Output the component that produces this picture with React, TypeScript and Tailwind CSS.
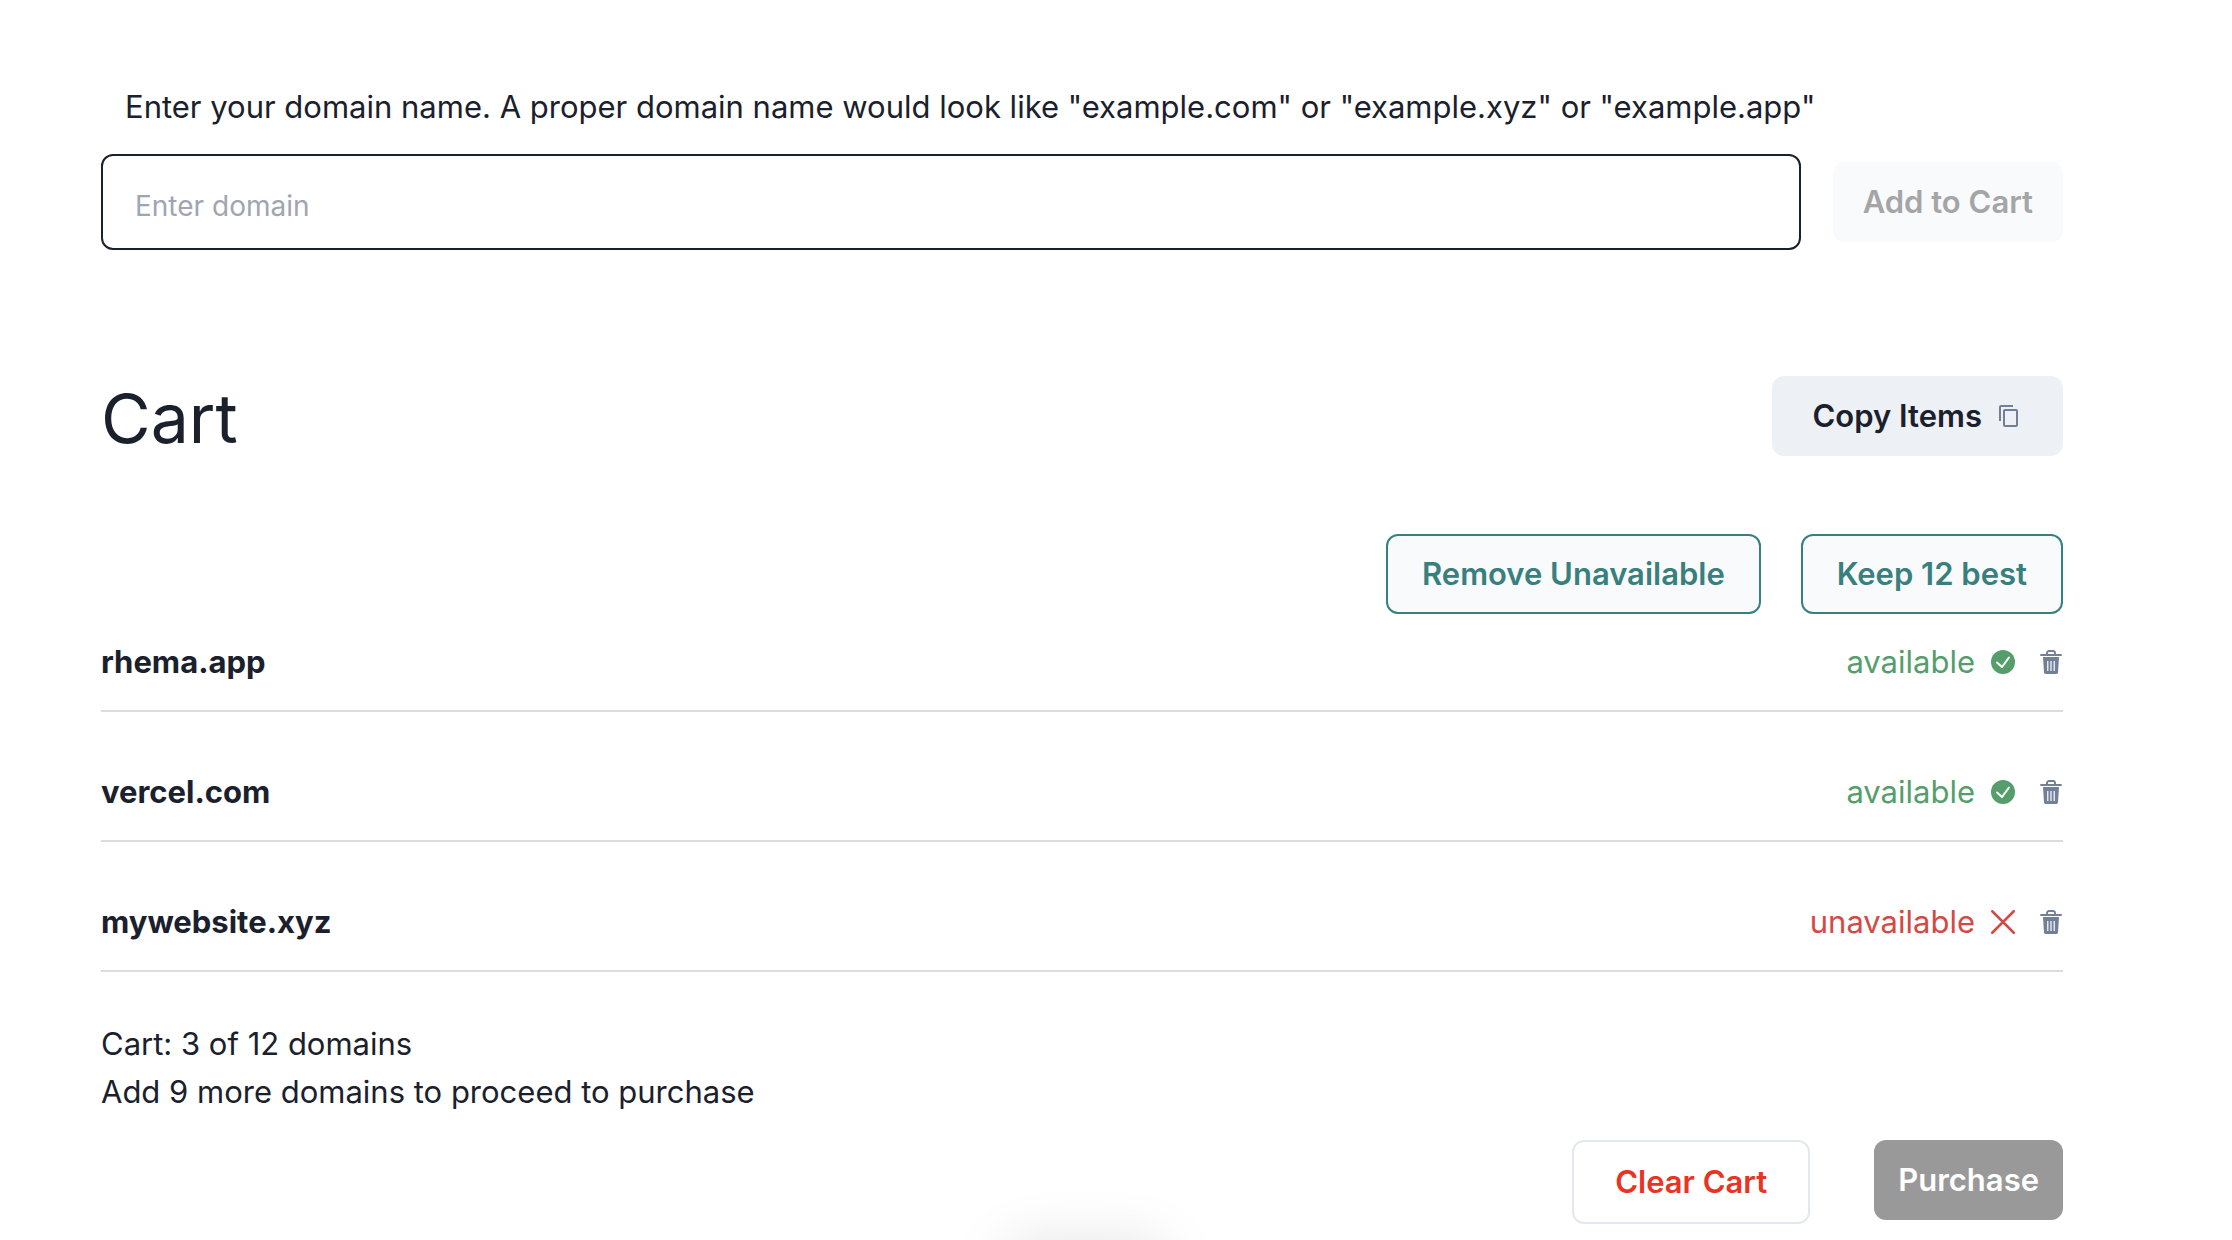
import { useState } from "react";

type Domain = { name: string; available: boolean };

const domains: Domain[] = [
  { name: "rhema.app", available: true },
  { name: "vercel.com", available: true },
  { name: "mywebsite.xyz", available: false },
];

function CopyIcon() {
  return (
    <svg viewBox="0 0 24 24" className="size-6" fill="none" stroke="#718096" strokeWidth="2" aria-hidden="true">
      <path d="M2 17V3a1 1 0 0 1 1-1h12" />
      <rect x="6" y="6" width="13" height="16" rx="1" />
    </svg>
  );
}

function CheckIcon() {
  return (
    <svg viewBox="0 0 24 24" className="size-6" aria-hidden="true">
      <circle cx="12" cy="12" r="12" fill="#559e6b" />
      <path d="M6 12.500l5 4.500 7-9.500" fill="none" stroke="#fff" strokeWidth="2" strokeLinecap="round" strokeLinejoin="round" />
    </svg>
  );
}

function CrossIcon() {
  return (
    <svg viewBox="0 0 24 24" className="size-6" fill="none" stroke="#d34a44" strokeWidth="2.500" strokeLinecap="round" aria-hidden="true">
      <path d="M1.250 1.250l21.500 21.500M22.750 1.250l-21.500 21.500" />
    </svg>
  );
}

function TrashIcon() {
  return (
    <svg viewBox="0 0 24 24" className="size-6" aria-hidden="true">
      <path d="M2 5h20M8 5V3a2 2 0 0 1 2-2h4a2 2 0 0 1 2 2v2" fill="none" stroke="#718096" strokeWidth="1.900" strokeLinecap="round" />
      <path fillRule="evenodd" fill="#718096" d="M4 7h16l-1 15.500a1.600 1.600 0 0 1-1.500 1.500h-11a1.600 1.600 0 0 1-1.500-1.500zM8.200 11v10h1.200V11zM11.400 11v10h1.200V11zM14.600 11v10h1.200V11z" />
    </svg>
  );
}

export default function App() {
  const [value, setValue] = useState("");
  return (
    <main className="relative min-h-screen overflow-hidden bg-white pt-[83px] pr-[169px] pl-[101px] font-['Inter',sans-serif] text-[31px] leading-12 text-[#1a202c]">
      <label htmlFor="domain" className="block pl-6">
        Enter your domain name. A proper domain name would look like "example.com" or "example.xyz" or "example.app"
      </label>
      <div className="mt-[23px] flex items-center gap-8">
        <input
          id="domain"
          value={value}
          onChange={(e) => setValue(e.target.value)}
          placeholder="Enter domain"
          className="h-24 min-w-0 flex-1 rounded-xl border-2 border-[#1a202c] px-8 pt-2 text-[28px] placeholder:text-[#a0a5b1]"
        />
        <button disabled className="h-20 rounded-xl bg-[#f9fafc] px-[30px] font-semibold text-[#a4a5a7]">
          Add to Cart
        </button>
      </div>

      <section>
        <div className="mt-[124px] flex items-center justify-between">
          <h1 className="pt-1 text-[68px] leading-20">Cart</h1>
          <button className="flex h-20 items-center gap-4 rounded-xl bg-[#edf0f5] px-[41px] font-semibold">
            Copy Items
            <CopyIcon />
          </button>
        </div>

        <div className="mt-[76px] flex justify-end gap-10 font-semibold text-[#37807e]">
          <button className="h-20 rounded-xl border-2 border-[#37807e] bg-[#f9fafc] px-[34px]">Remove Unavailable</button>
          <button className="h-20 rounded-xl border-2 border-[#37807e] bg-[#f9fafc] px-[34px]">Keep 12 best</button>
        </div>

        <ul className="mt-6 flex flex-col gap-14">
          {domains.map((d) => (
            <li key={d.name} className="flex h-[74px] items-start justify-between border-b-2 border-[#dcdcdc]">
              <span className="font-bold">{d.name}</span>
              <span className="flex items-center">
                <span className={d.available ? "text-[#559e6b]" : "text-[#d34a44]"}>
                  {d.available ? "available" : "unavailable"}
                </span>
                <span className="ml-4">{d.available ? <CheckIcon /> : <CrossIcon />}</span>
                <button className="ml-6" aria-label={"Remove " + d.name}>
                  <TrashIcon />
                </button>
              </span>
            </li>
          ))}
        </ul>

        <p className="mt-12">Cart: 3 of 12 domains</p>
        <p>Add 9 more domains to proceed to purchase</p>

        <div className="mt-6 flex items-start justify-end gap-16 font-semibold">
          <button className="h-[84px] rounded-xl border-2 border-[#e2e8f0] px-[41px] text-[#e93323]">Clear Cart</button>
          <button disabled className="h-20 rounded-xl bg-[#999999] px-6 text-white">
            Purchase
          </button>
        </div>
      </section>
      <div className="absolute -bottom-12 left-[1005px] h-10 w-[160px] rounded-full shadow-[0_0_60px_rgba(0,0,0,0.15)]" />
    </main>
  );
}
